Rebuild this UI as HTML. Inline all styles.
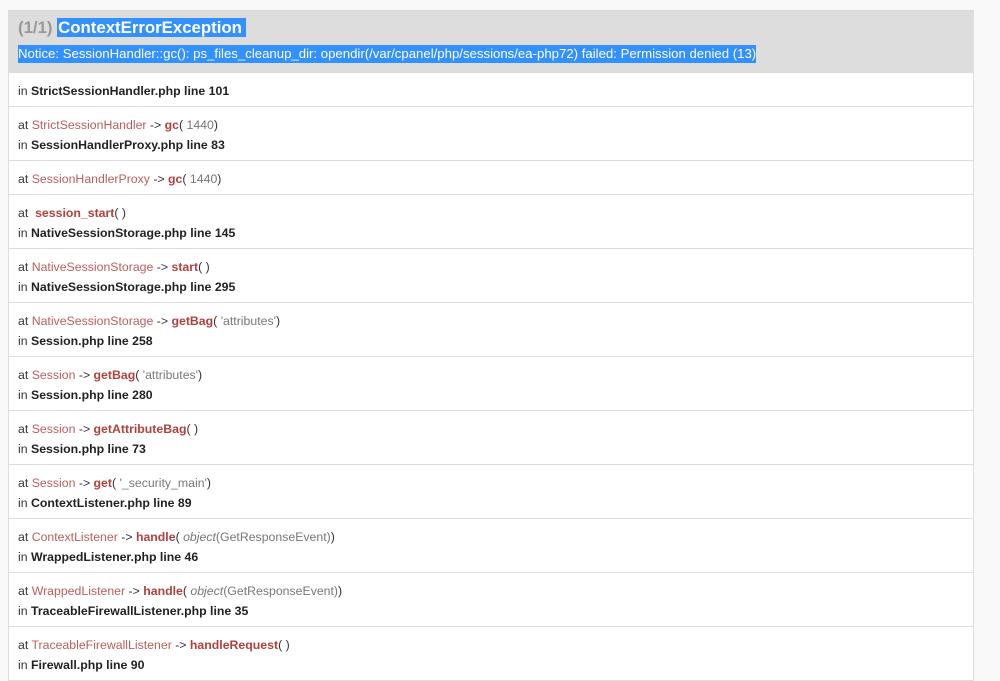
<!DOCTYPE html>
<html><head><meta charset="utf-8"><style>
body{margin:0;background:#f9f9f9;font-family:"Liberation Sans",Arial,sans-serif;color:#222;}
.wrap{position:absolute;left:8px;top:10px;width:964px;border:1px solid #ddd;border-top:none;background:#fff;}
.head{background:#ddd;height:62px;position:relative;}
.t{position:absolute;left:9px;top:7px;font-size:16.8px;font-weight:bold;color:#999;line-height:22px;}
.t .s{background:#3390ff;color:#fff;padding:0 4px 0 1px;}
.n{position:absolute;left:9px;top:35px;font-size:13.2px;line-height:18px;background:#3390ff;color:#fff;}
.row{border-top:1px solid #ddd;padding:8px 9px 5px;font-size:12.3px;line-height:20px;color:#333;}
.row:first-of-type{border-top:none;padding-bottom:6px}
.c{color:#b0413e;opacity:.85}
.f{color:#b0413e;font-weight:bold}
.a{color:#777}
b{color:#222}
i{color:#777}
</style></head><body>
<div class="wrap">
<div class="head"><div class="t">(1/1) <span class="s">ContextErrorException</span></div>
<div class="n">Notice: SessionHandler::gc(): ps_files_cleanup_dir: opendir(/var/cpanel/php/sessions/ea-php72) failed: Permission denied (13)</div></div>
<div class="row">in <b>StrictSessionHandler.php line 101</b></div>
<div class="row">at <span class="c">StrictSessionHandler</span> -&gt; <span class="f">gc</span>( <span class="a">1440</span>)<div>in <b>SessionHandlerProxy.php line 83</b></div></div>
<div class="row">at <span class="c">SessionHandlerProxy</span> -&gt; <span class="f">gc</span>( <span class="a">1440</span>)</div>
<div class="row">at &nbsp;<span class="f">session_start</span>( )<div>in <b>NativeSessionStorage.php line 145</b></div></div>
<div class="row">at <span class="c">NativeSessionStorage</span> -&gt; <span class="f">start</span>( )<div>in <b>NativeSessionStorage.php line 295</b></div></div>
<div class="row">at <span class="c">NativeSessionStorage</span> -&gt; <span class="f">getBag</span>( <span class="a">'attributes'</span>)<div>in <b>Session.php line 258</b></div></div>
<div class="row">at <span class="c">Session</span> -&gt; <span class="f">getBag</span>( <span class="a">'attributes'</span>)<div>in <b>Session.php line 280</b></div></div>
<div class="row">at <span class="c">Session</span> -&gt; <span class="f">getAttributeBag</span>( )<div>in <b>Session.php line 73</b></div></div>
<div class="row">at <span class="c">Session</span> -&gt; <span class="f">get</span>( <span class="a">'_security_main'</span>)<div>in <b>ContextListener.php line 89</b></div></div>
<div class="row">at <span class="c">ContextListener</span> -&gt; <span class="f">handle</span>( <i>object</i><span class="a">(GetResponseEvent)</span>)<div>in <b>WrappedListener.php line 46</b></div></div>
<div class="row">at <span class="c">WrappedListener</span> -&gt; <span class="f">handle</span>( <i>object</i><span class="a">(GetResponseEvent)</span>)<div>in <b>TraceableFirewallListener.php line 35</b></div></div>
<div class="row">at <span class="c">TraceableFirewallListener</span> -&gt; <span class="f">handleRequest</span>( )<div>in <b>Firewall.php line 90</b></div></div>
</div>
</body></html>
